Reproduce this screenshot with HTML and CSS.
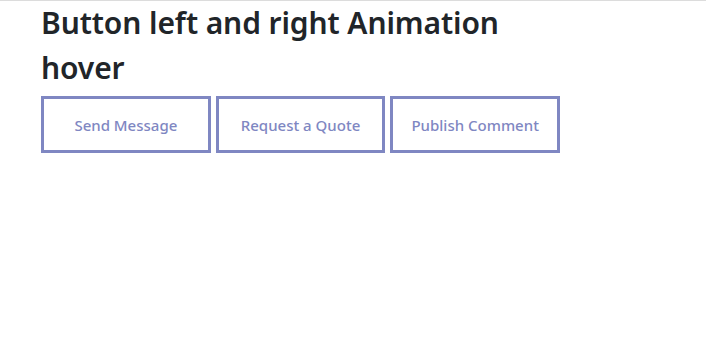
FILE: index.html
```html
<!DOCTYPE html>
<html>
<head>
<meta charset="utf-8">
<link rel="stylesheet" href="styles.css">
</head>
<body>
<div class="topline"></div>
<main class="wrap">
  <h1 class="title">Button left and right Animation hover</h1>
  <div class="buttons">
    <button class="btn">Send Message</button>
    <button class="btn">Request a Quote</button>
    <button class="btn">Publish Comment</button>
  </div>
</main>
</body>
</html>
```
FILE: styles.css
```css
html, body { margin: 0; padding: 0; background: #fff; }
body { font-family: "Noto Sans", "Open Sans", sans-serif; color: #212529; }
.topline { height: 1px; background: #dcdcdc; }
.wrap { padding: 0 0 0 41px; width: 519px; }
.title {
  margin: -1px 0 0;
  font-size: 30px;
  font-weight: 600;
  letter-spacing: -0.1px;
  line-height: 45px;
  color: #212529;
}
.buttons { display: flex; gap: 5px; margin-top: 6px; }
.btn {
  flex: 1 1 0;
  box-sizing: border-box;
  height: 57px;
  background: #fff;
  border: 3px solid #7f87c2;
  color: #7f87c2;
  font-family: "Noto Sans", "Open Sans", sans-serif;
  font-size: 15px;
  font-weight: 500;
  padding: 0;
}
```
